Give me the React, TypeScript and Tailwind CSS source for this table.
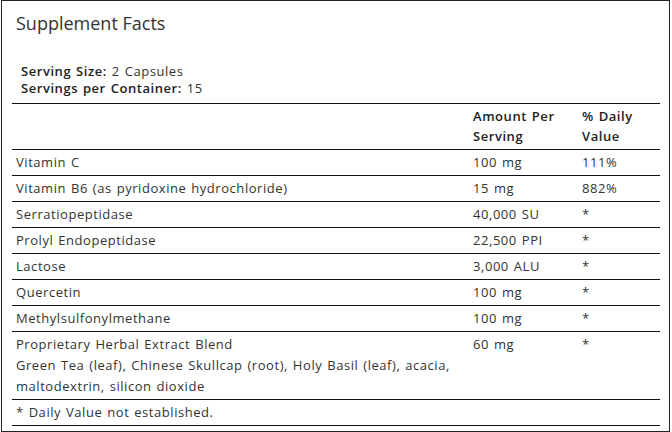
import React from "react";

type Row = { name: React.ReactNode; amount: string; dv: string };

const rows: Row[] = [
  { name: "Vitamin C", amount: "100 mg", dv: "111%" },
  { name: "Vitamin B6 (as pyridoxine hydrochloride)", amount: "15 mg", dv: "882%" },
  { name: "Serratiopeptidase", amount: "40,000 SU", dv: "*" },
  { name: "Prolyl Endopeptidase", amount: "22,500 PPI", dv: "*" },
  { name: "Lactose", amount: "3,000 ALU", dv: "*" },
  { name: "Quercetin", amount: "100 mg", dv: "*" },
  { name: "Methylsulfonylmethane", amount: "100 mg", dv: "*" },
];

const body =
  "font-['Open_Sans',sans-serif] text-[13px] tracking-[0.55px] [word-spacing:1px] text-[#333]";

export default function App() {
  return (
    <div className="bg-white w-[672px] h-[432px]">
      <div className="ml-px w-[669px] h-[432px] border border-[#222] pl-[10px] pr-[8px] pt-[10px]">
        <div className="pl-[4px] font-['Open_Sans',sans-serif] text-[18px] leading-[24px] text-[#333]">
          Supplement Facts
        </div>
        <div className={`${body} mt-[28px] pl-[9px] leading-[17px]`}>
          <div>
            <span className="font-semibold text-[#222]">Serving Size:</span> 2 Capsules
          </div>
          <div>
            <span className="font-semibold text-[#222]">Servings per Container:</span> 15
          </div>
        </div>
        <div className={`${body} mt-[6px] w-[648px] border-t border-[#111]`}>
          <div className="grid grid-cols-[457px_109px_82px] border-b border-[#111] leading-[20px]">
            <div className="pl-[4px] pt-[2px] pb-[3px]"></div>
            <div className="pl-[4px] pt-[2px] pb-[3px] font-semibold text-[#222]">
              Amount Per
              <br />
              Serving
            </div>
            <div className="pl-[4px] pt-[2px] pb-[3px] font-semibold text-[#222]">
              % Daily
              <br />
              Value
            </div>
          </div>
          {rows.map((r, i) => (
            <div
              key={i}
              className="grid grid-cols-[457px_109px_82px] border-b border-[#111] leading-[20px]"
            >
              <div className="pl-[4px] pt-[2px] pb-[3px]">{r.name}</div>
              <div className="pl-[4px] pt-[2px] pb-[3px]">{r.amount}</div>
              <div className="pl-[4px] pt-[2px] pb-[3px]">{r.dv}</div>
            </div>
          ))}
          <div className="grid grid-cols-[457px_109px_82px] border-b border-[#111] leading-[21px]">
            <div className="pl-[4px] pt-[2px] pb-[2px]">
              <div>Proprietary Herbal Extract Blend</div>
              <div>
                Green Tea (leaf), Chinese Skullcap (root), Holy Basil (leaf), acacia, maltodextrin, silicon dioxide
              </div>
            </div>
            <div className="pl-[4px] pt-[2px] pb-[2px]">60 mg</div>
            <div className="pl-[4px] pt-[2px] pb-[2px]">*</div>
          </div>
          <div className="border-b border-[#111] pl-[4px] pt-[2px] pb-[3px] leading-[20px]">
            * Daily Value not established.
          </div>
        </div>
      </div>
    </div>
  );
}
